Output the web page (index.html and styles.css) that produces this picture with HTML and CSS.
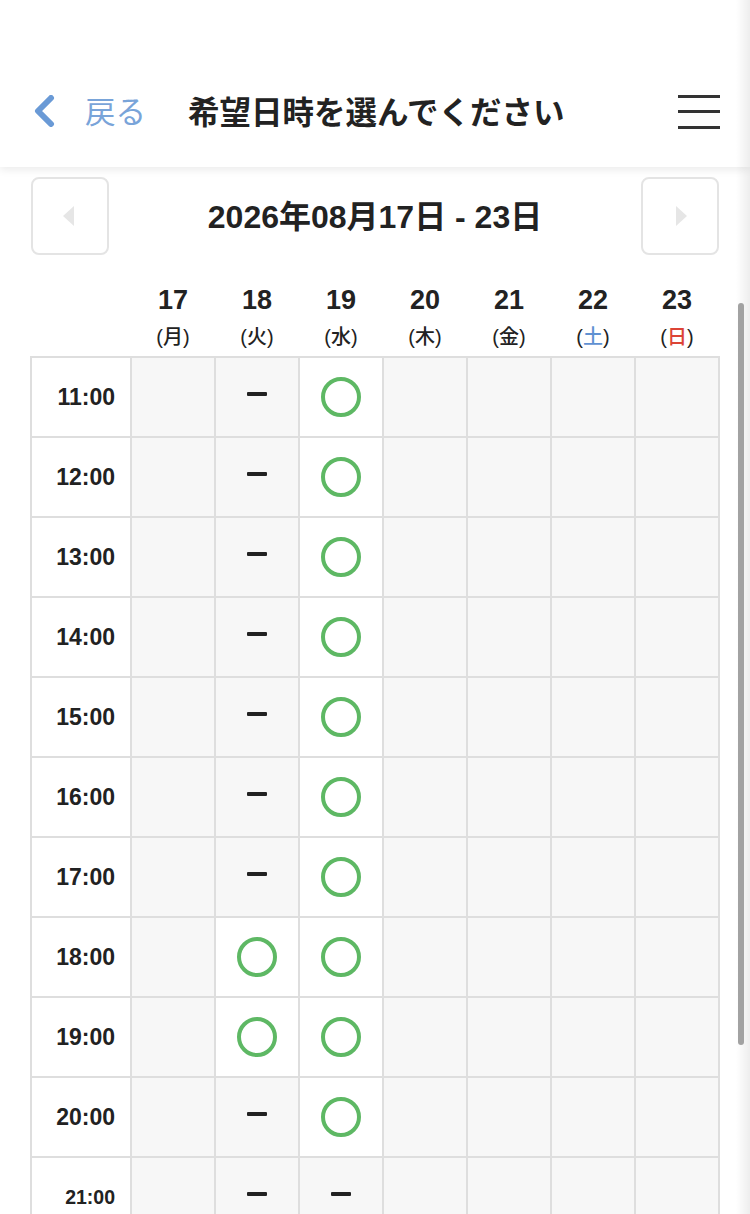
FILE: index.html
```html
<!DOCTYPE html>
<html lang="ja">
  <head>
    <meta charset="UTF-8" />
    <meta name="viewport" content="width=device-width, initial-scale=1.0" />
    <title>希望日時を選んでください</title>
    <link rel="stylesheet" href="styles.css">
  </head>
  <body>
    <header class="header">
      <a class="back" href="#">
        <svg class="back-icon" width="22" height="32" viewBox="0 0 22 32">
          <path d="M18 3 L5 16 L18 29" fill="none" stroke="#6a9ad6" stroke-width="6" stroke-linecap="round" stroke-linejoin="round" />
        </svg>
        <span class="back-text">戻る</span>
      </a>
      <h1 class="title">希望日時を選んでください</h1>
      <div class="menu">
        <span></span>
        <span></span>
        <span></span>
      </div>
    </header>

    <div class="container">
      <div class="week-nav">
        <button class="btn-week"><span class="arrow arrow-left"></span></button>
        <div class="week-title">2026年08月17日 - 23日</div>
        <button class="btn-week"><span class="arrow arrow-right"></span></button>
      </div>

      <div class="days">
        <div></div>
        <div class="day"><div class="day-num">17</div><div class="day-week">(月)</div></div>
        <div class="day"><div class="day-num">18</div><div class="day-week">(火)</div></div>
        <div class="day"><div class="day-num">19</div><div class="day-week">(水)</div></div>
        <div class="day"><div class="day-num">20</div><div class="day-week">(木)</div></div>
        <div class="day"><div class="day-num">21</div><div class="day-week">(金)</div></div>
        <div class="day"><div class="day-num">22</div><div class="day-week">(<span class="sat">土</span>)</div></div>
        <div class="day"><div class="day-num">23</div><div class="day-week">(<span class="sun">日</span>)</div></div>
      </div>

      <div class="schedule">
        <div class="time">11:00</div>
        <div class="cell"></div><div class="cell"><i class="ng"></i></div><div class="cell open"><i class="ok"></i></div>
        <div class="cell"></div><div class="cell"></div><div class="cell"></div><div class="cell"></div>

        <div class="time">12:00</div>
        <div class="cell"></div><div class="cell"><i class="ng"></i></div><div class="cell open"><i class="ok"></i></div>
        <div class="cell"></div><div class="cell"></div><div class="cell"></div><div class="cell"></div>

        <div class="time">13:00</div>
        <div class="cell"></div><div class="cell"><i class="ng"></i></div><div class="cell open"><i class="ok"></i></div>
        <div class="cell"></div><div class="cell"></div><div class="cell"></div><div class="cell"></div>

        <div class="time">14:00</div>
        <div class="cell"></div><div class="cell"><i class="ng"></i></div><div class="cell open"><i class="ok"></i></div>
        <div class="cell"></div><div class="cell"></div><div class="cell"></div><div class="cell"></div>

        <div class="time">15:00</div>
        <div class="cell"></div><div class="cell"><i class="ng"></i></div><div class="cell open"><i class="ok"></i></div>
        <div class="cell"></div><div class="cell"></div><div class="cell"></div><div class="cell"></div>

        <div class="time">16:00</div>
        <div class="cell"></div><div class="cell"><i class="ng"></i></div><div class="cell open"><i class="ok"></i></div>
        <div class="cell"></div><div class="cell"></div><div class="cell"></div><div class="cell"></div>

        <div class="time">17:00</div>
        <div class="cell"></div><div class="cell"><i class="ng"></i></div><div class="cell open"><i class="ok"></i></div>
        <div class="cell"></div><div class="cell"></div><div class="cell"></div><div class="cell"></div>

        <div class="time">18:00</div>
        <div class="cell"></div><div class="cell open"><i class="ok"></i></div><div class="cell open"><i class="ok"></i></div>
        <div class="cell"></div><div class="cell"></div><div class="cell"></div><div class="cell"></div>

        <div class="time">19:00</div>
        <div class="cell"></div><div class="cell open"><i class="ok"></i></div><div class="cell open"><i class="ok"></i></div>
        <div class="cell"></div><div class="cell"></div><div class="cell"></div><div class="cell"></div>

        <div class="time">20:00</div>
        <div class="cell"></div><div class="cell"><i class="ng"></i></div><div class="cell open"><i class="ok"></i></div>
        <div class="cell"></div><div class="cell"></div><div class="cell"></div><div class="cell"></div>

        <div class="time time-small">21:00</div>
        <div class="cell"></div><div class="cell"><i class="ng"></i></div><div class="cell"><i class="ng"></i></div>
        <div class="cell"></div><div class="cell"></div><div class="cell"></div><div class="cell"></div>
      </div>
    </div>

    <div class="edge-shadow"></div>
    <div class="scrollbar"></div>
  </body>
</html>
```

FILE: styles.css
```css
html,
body {
  margin: 0;
  height: 1214px;
  overflow: hidden;
}
body {
  position: relative;
  background-color: #fff;
  color: #222;
  font-family: "Liberation Sans", "Noto Sans CJK JP", sans-serif;
}

.header {
  position: relative;
  z-index: 1;
  display: flex;
  align-items: center;
  height: 114px;
  padding: 53px 30px 0 33px;
  background-color: #fff;
  box-shadow: 0 3px 8px rgba(0, 0, 0, 0.08);
}
.back {
  display: flex;
  align-items: center;
  text-decoration: none;
}
.back-icon {
  display: block;
  margin-top: 1px;
}
.back-text {
  margin-left: 30px;
  font-family: "Noto Sans CJK JP", sans-serif;
  font-size: 30.5px;
  font-weight: 400;
  color: #79a4d9;
}
.title {
  margin: 0 0 0 42px;
  font-family: "Noto Sans CJK JP", sans-serif;
  font-size: 31.5px;
  font-weight: 700;
  color: #222;
}
.menu {
  display: flex;
  flex-direction: column;
  gap: 12.5px;
  margin-left: auto;
  margin-top: 3px;
  width: 42px;
}
.menu span {
  display: block;
  height: 3px;
  background-color: #333;
}

.container {
  padding: 0 30px;
}
.week-nav {
  display: flex;
  justify-content: space-between;
  align-items: center;
  margin: 10px 0 0 1px;
  width: 688px;
}
.btn-week {
  display: flex;
  justify-content: center;
  align-items: center;
  width: 78px;
  height: 78px;
  padding: 0;
  background-color: #fff;
  border: 2px solid #e4e4e4;
  border-radius: 8px;
}
.arrow {
  width: 0;
  height: 0;
  border-top: 10px solid transparent;
  border-bottom: 10px solid transparent;
}
.arrow-left {
  border-right: 11px solid #e6e6e6;
  margin-left: -4px;
}
.arrow-right {
  border-left: 11px solid #e6e6e6;
  margin-right: -4px;
}
.week-title {
  margin-top: -4px;
  font-family: "Liberation Sans", "Noto Sans CJK JP", sans-serif;
  font-size: 32px;
  font-weight: 700;
  color: #222;
}

.days {
  display: grid;
  grid-template-columns: 98px repeat(7, 82px);
  gap: 2px;
  padding: 29px 2px 6px;
}
.day {
  text-align: center;
}
.day-num {
  font-size: 27px;
  font-weight: 700;
  line-height: 32px;
  color: #222;
}
.day-week {
  margin-top: 8px;
  font-size: 20px;
  font-weight: 500;
  line-height: 26px;
  color: #222;
}
.sat {
  color: #5f91d2;
}
.sun {
  color: #dc4436;
}

.schedule {
  display: grid;
  grid-template-columns: 98px repeat(7, 82px);
  grid-auto-rows: 78px;
  gap: 2px;
  padding: 2px;
  width: max-content;
  background-color: #dedede;
}
.time {
  display: flex;
  justify-content: flex-end;
  align-items: center;
  padding-right: 15px;
  background-color: #fff;
  font-size: 23px;
  font-weight: 700;
  color: #222;
}
.time-small {
  font-size: 19.5px;
}
.cell {
  display: flex;
  justify-content: center;
  align-items: center;
  background-color: #f7f7f7;
}
.cell.open {
  background-color: #fff;
}
.ok {
  display: block;
  box-sizing: border-box;
  width: 40px;
  height: 40px;
  border: 4.5px solid #5eb864;
  border-radius: 50%;
}
.ng {
  display: block;
  width: 20px;
  height: 4.5px;
  margin-top: -6px;
  border-radius: 1px;
  background-color: #222;
}

.edge-shadow {
  position: absolute;
  top: 0;
  right: 0;
  z-index: 2;
  width: 14px;
  height: 100%;
  background: linear-gradient(to right, rgba(0, 0, 0, 0), rgba(0, 0, 0, 0.07));
}
.scrollbar {
  position: absolute;
  top: 303px;
  left: 738px;
  z-index: 3;
  width: 6px;
  height: 742px;
  border-radius: 3px;
  background-color: #a2a2a2;
}
```
